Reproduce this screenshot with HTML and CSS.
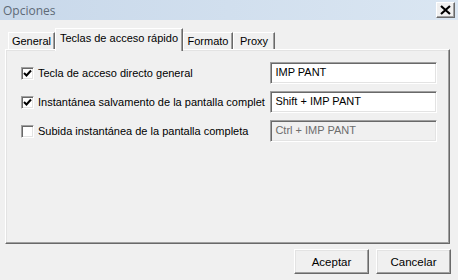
FILE: index.html
```html
<!DOCTYPE html>
<html lang="es">
<head>
  <meta charset="UTF-8" />
  <title>Opciones</title>
  <link rel="stylesheet" href="styles.css">
</head>
<body>

  <div class="window">
    <div class="titlebar">
      <span class="title">Opciones</span>
      <span class="close-btn">
        <svg width="11" height="10" viewBox="0 0 11 10">
          <path d="M1 1L10 9M10 1L1 9" stroke="#000" stroke-width="2.2" />
        </svg>
      </span>
    </div>

    <div class="tabs">
      <div class="tab tab-general">General</div>
      <div class="tab tab-keys active">Teclas de acceso rápido</div>
      <div class="tab tab-format">Formato</div>
      <div class="tab tab-proxy">Proxy</div>
    </div>

    <div class="panel">
      <div class="row">
        <span class="check checked"><svg width="9" height="9" viewBox="0 0 9 9"><path d="M1 4L3.5 6.5L8 1.5" stroke="#000" stroke-width="2" fill="none" /></svg></span>
        <span class="label">Tecla de acceso directo general</span>
        <span class="field">IMP PANT</span>
      </div>
      <div class="row">
        <span class="check checked"><svg width="9" height="9" viewBox="0 0 9 9"><path d="M1 4L3.5 6.5L8 1.5" stroke="#000" stroke-width="2" fill="none" /></svg></span>
        <span class="label">Instantánea salvamento de la pantalla complet</span>
        <span class="field">Shift + IMP PANT</span>
      </div>
      <div class="row">
        <span class="check"></span>
        <span class="label">Subida instantánea de la pantalla completa</span>
        <span class="field disabled">Ctrl + IMP PANT</span>
      </div>
    </div>

    <div class="buttons">
      <button class="btn">Aceptar</button>
      <button class="btn">Cancelar</button>
    </div>
  </div>

</body>
</html>
```

FILE: styles.css
```css
* {
  margin: 0;
  padding: 0;
  box-sizing: border-box;
}

body {
  font-family: 'Liberation Sans', Arial, sans-serif;
  font-size: 11px;
  color: #000;
  background: #f0f0f0;
}

.window {
  width: 458px;
  height: 280px;
  background: #f0f0f0;
  display: flex;
  flex-direction: column;
}

/* title bar */
.titlebar {
  height: 20px;
  display: flex;
  align-items: center;
  justify-content: space-between;
  padding: 0 3px 0 3px;
  background: linear-gradient(to right, #c8d8ea, #dae6f2);
}

.title {
  font-family: 'Open Sans', sans-serif;
  font-size: 12px;
  color: #5e6a76;
}

.close-btn {
  width: 19px;
  height: 16px;
  display: flex;
  align-items: center;
  justify-content: center;
  background: #f0f0f0;
  border-top: 1px solid #fff;
  border-left: 1px solid #fff;
  border-right: 1px solid #696969;
  border-bottom: 1px solid #696969;
  box-shadow: inset -1px -1px 0 #a0a0a0;
}

/* tabs */
.tabs {
  display: flex;
  align-items: flex-end;
  height: 21px;
  margin-top: 8px;
  padding-left: 8px;
}

.tab {
  height: 17px;
  padding-top: 2px;
  text-align: center;
  border-top: 1px solid #fff;
  border-left: 1px solid #fff;
  border-right: 1px solid #696969;
  box-shadow: inset -1px 0 0 #a0a0a0;
  background: #f0f0f0;
  white-space: nowrap;
}

.tab-general { width: 47px; }
.tab-keys { width: 128px; }
.tab-format { width: 50px; }
.tab-proxy { width: 42px; }

.tab.active {
  position: relative;
  z-index: 1;
  height: 23px;
  margin-bottom: -2px;
  padding-top: 3px;
}

/* panel */
.panel {
  height: 195px;
  margin: 0 8px 0 5px;
  padding: 12px 12px 0 13px;
  border-top: 1px solid #fff;
  border-left: 1px solid #fff;
  border-right: 1px solid #696969;
  border-bottom: 1px solid #696969;
  box-shadow: inset -1px -1px 0 #a0a0a0, inset 1px 1px 0 #e3e3e3;
  display: flex;
  flex-direction: column;
  gap: 7px;
}

.row {
  display: flex;
  align-items: center;
  height: 22px;
}

.check {
  width: 13px;
  height: 13px;
  flex-shrink: 0;
  margin-left: 2px;
  background: #fff;
  border-top: 1px solid #a0a0a0;
  border-left: 1px solid #a0a0a0;
  border-right: 1px solid #fff;
  border-bottom: 1px solid #fff;
  box-shadow: inset 1px 1px 0 #696969, inset -1px -1px 0 #e3e3e3;
  display: flex;
  align-items: center;
  justify-content: center;
}

.label {
  width: 229px;
  margin: 0 4px 0 4px;
  white-space: nowrap;
}

.field {
  width: 167px;
  height: 22px;
  padding: 3px 0 0 4px;
  background: #fff;
  border-top: 1px solid #a0a0a0;
  border-left: 1px solid #a0a0a0;
  border-right: 1px solid #fff;
  border-bottom: 1px solid #fff;
  box-shadow: inset 1px 1px 0 #696969, inset -1px -1px 0 #e3e3e3;
  white-space: nowrap;
}

.field.disabled {
  background: #f0f0f0;
  color: #6d6d6d;
}

/* buttons */
.buttons {
  display: flex;
  justify-content: flex-end;
  gap: 7px;
  padding: 5px 7px 0 0;
}

.btn {
  width: 75px;
  height: 25px;
  font-family: inherit;
  font-size: 11.5px;
  color: #000;
  background: #f0f0f0;
  border-top: 1px solid #fff;
  border-left: 1px solid #fff;
  border-right: 1px solid #696969;
  border-bottom: 1px solid #696969;
  box-shadow: inset -1px -1px 0 #a0a0a0, inset 1px 1px 0 #e3e3e3;
}
```
